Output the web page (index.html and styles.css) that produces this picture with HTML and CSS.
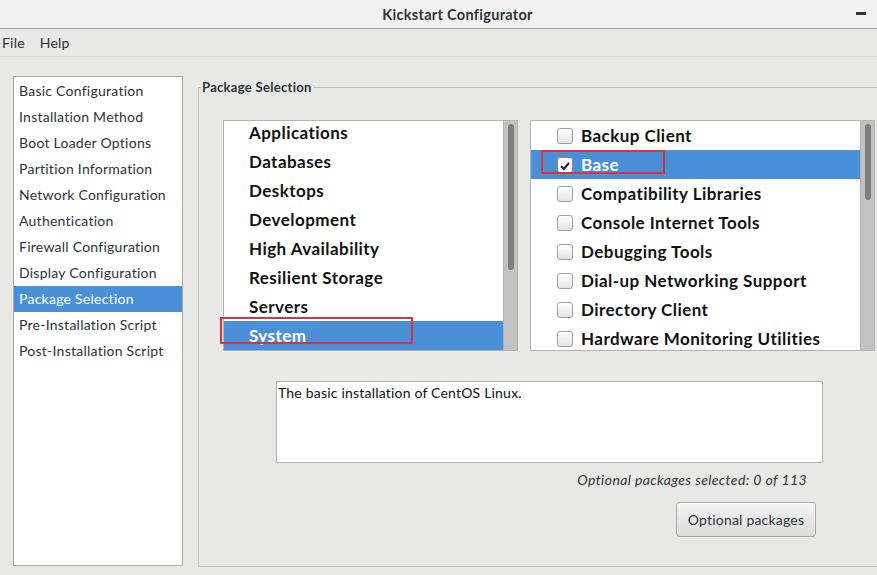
FILE: index.html
```html
<!DOCTYPE html>
<html>
<head>
<meta charset="utf-8">
<link rel="stylesheet" href="styles.css">
</head>
<body>
<div class="titlebar">
  <span class="title">Kickstart Configurator</span>
  <span class="minimize"></span>
</div>
<div class="menubar">
  <span class="menu-item">File</span>
  <span class="menu-item">Help</span>
</div>
<div class="main">
  <ul class="nav">
    <li>Basic Configuration</li>
    <li>Installation Method</li>
    <li>Boot Loader Options</li>
    <li>Partition Information</li>
    <li>Network Configuration</li>
    <li>Authentication</li>
    <li>Firewall Configuration</li>
    <li>Display Configuration</li>
    <li class="selected">Package Selection</li>
    <li>Pre-Installation Script</li>
    <li>Post-Installation Script</li>
  </ul>
  <fieldset class="frame">
    <legend>Package Selection</legend>
    <div class="lists">
      <div class="listbox groups">
        <ul class="rows scrolled">
          <li>Applications</li>
          <li>Databases</li>
          <li>Desktops</li>
          <li>Development</li>
          <li>High Availability</li>
          <li>Resilient Storage</li>
          <li>Servers</li>
          <li class="selected"><span class="mark mark-system"></span>System</li>
        </ul>
        <div class="scrollbar"><div class="thumb thumb-left"></div></div>
      </div>
      <div class="listbox packages">
        <ul class="rows">
          <li><span class="check"></span>Backup Client</li>
          <li class="selected"><span class="mark mark-base"></span><span class="check checked"><svg viewBox="0 0 16 16" width="16" height="16"><path d="M3.5 8.2 L6.6 11.3 L12.6 4.6" fill="none" stroke="#222" stroke-width="2.4"/></svg></span>Base</li>
          <li><span class="check"></span>Compatibility Libraries</li>
          <li><span class="check"></span>Console Internet Tools</li>
          <li><span class="check"></span>Debugging Tools</li>
          <li><span class="check"></span>Dial-up Networking Support</li>
          <li><span class="check"></span>Directory Client</li>
          <li><span class="check"></span>Hardware Monitoring Utilities</li>
        </ul>
        <div class="scrollbar"><div class="thumb thumb-right"></div></div>
      </div>
    </div>
    <div class="description">The basic installation of CentOS Linux.</div>
    <div class="status">Optional packages selected: 0 of 113</div>
    <div class="actions"><button class="btn">Optional packages</button></div>
  </fieldset>
</div>
</body>
</html>
```
FILE: styles.css
```css
* { box-sizing: border-box; }
html, body {
  margin: 0;
  padding: 0;
  width: 877px;
  height: 575px;
  overflow: hidden;
  background: #e8e8e7;
  font-family: "Lato", "Noto Sans", sans-serif;
  color: #2e3436;
}
.titlebar {
  height: 29px;
  background: #f2f2f2;
  border-bottom: 1px solid #a8a8a8;
  display: flex;
  align-items: center;
  justify-content: center;
  padding-left: 38px;
  position: relative;
}
.title {
  font-size: 14.5px;
  font-weight: bold;
  letter-spacing: 0.3px;
  color: #2e3436;
}
.minimize {
  position: absolute;
  right: 11px;
  top: 12px;
  width: 10px;
  height: 3px;
  background: #2e3436;
}
.menubar {
  height: 28px;
  background: #e8e8e7;
  border-bottom: 1px solid #d6d6d6;
  display: flex;
  align-items: center;
  gap: 15px;
  padding-left: 2px;
  font-size: 14px;
  letter-spacing: 0.2px;
}
.main {
  display: flex;
  padding: 19px 0 0 13px;
}
.nav {
  list-style: none;
  margin: 0;
  padding: 1px 0 0 0;
  width: 170px;
  height: 490px;
  flex: none;
  background: #fff;
  border: 1px solid #a9a9a9;
  font-size: 14px;
  letter-spacing: 0.25px;
}
.nav li {
  height: 26px;
  line-height: 26px;
  padding-left: 5px;
  color: #2e3436;
}
.nav li.selected {
  background: #4a90d9;
  color: #fff;
}
.frame {
  margin: 3px 0 0 15px;
  padding: 0;
  width: 690px;
  height: 488px;
  flex: none;
  border: 1px solid #c4c4c4;
  border-right: none;
  min-width: 0;
}
.frame legend {
  margin-left: 2px;
  padding: 0 1px;
  font-size: 13px;
  font-weight: bold;
  letter-spacing: 0.3px;
  color: #2e3436;
  line-height: 16px;
}
.lists {
  display: flex;
  gap: 12px;
  margin: 25px 0 0 24px;
}
.listbox {
  display: flex;
  height: 231px;
  background: #fff;
  border: 1px solid #b3b3b3;
}
.groups { width: 295px; }
.packages { width: 345px; }
.rows {
  list-style: none;
  margin: 0;
  padding: 0;
  flex: 1;
  font-size: 17px;
  font-weight: bold;
  letter-spacing: 0.45px;
  color: #111;
}
.rows.scrolled { margin-top: -3px; }
.rows li {
  height: 29px;
  line-height: 29px;
  display: flex;
  align-items: center;
  position: relative;
  white-space: nowrap;
}
.groups .rows li { padding-left: 25px; }
.packages .rows li { padding-left: 26px; }
.rows li.selected {
  background: #4a90d9;
  color: #fff;
}
.scrollbar {
  width: 14px;
  flex: none;
  background: #c2c2c2;
  border-left: 1px solid #b0b0b0;
  padding: 3px 3px;
}
.thumb {
  width: 6px;
  margin: 0 auto;
  background: #7f7f7f;
  border-radius: 3px;
}
.thumb-left { height: 146px; }
.thumb-right { height: 76px; }
.check {
  width: 16px;
  height: 16px;
  border: 1px solid #a0a0a0;
  border-radius: 3px;
  background: linear-gradient(#ffffff, #e4e4e4);
  margin-right: 8px;
  flex: none;
  display: flex;
}
.check.checked {
  background: #fff;
  border-color: #888;
}
.mark {
  position: absolute;
  border: 2px solid #d7343f;
  pointer-events: none;
  z-index: 2;
}
.mark-system {
  left: -4px;
  top: -4px;
  width: 193px;
  height: 27px;
}
.mark-base {
  left: 10px;
  top: 0;
  width: 124px;
  height: 24px;
}
.description {
  margin: 30px 0 0 77px;
  width: 547px;
  height: 82px;
  background: #fff;
  border: 1px solid #b3b3b3;
  font-size: 14px;
  letter-spacing: 0.2px;
  padding: 2px 0 0 1px;
  color: #111;
}
.status {
  width: 608px;
  text-align: right;
  margin-top: 8px;
  font-size: 14px;
  font-style: italic;
  letter-spacing: 0.4px;
  color: #333;
}
.actions {
  width: 617px;
  display: flex;
  justify-content: flex-end;
  margin-top: 14px;
}
.btn {
  height: 35px;
  width: 140px;
  font-family: inherit;
  font-size: 14px;
  letter-spacing: 0.2px;
  color: #2e3436;
  border: 1px solid #a9a9a9;
  border-radius: 3px;
  background: linear-gradient(#f4f4f4, #dcdcdc);
  box-shadow: inset 0 1px 0 #fff;
}
```
